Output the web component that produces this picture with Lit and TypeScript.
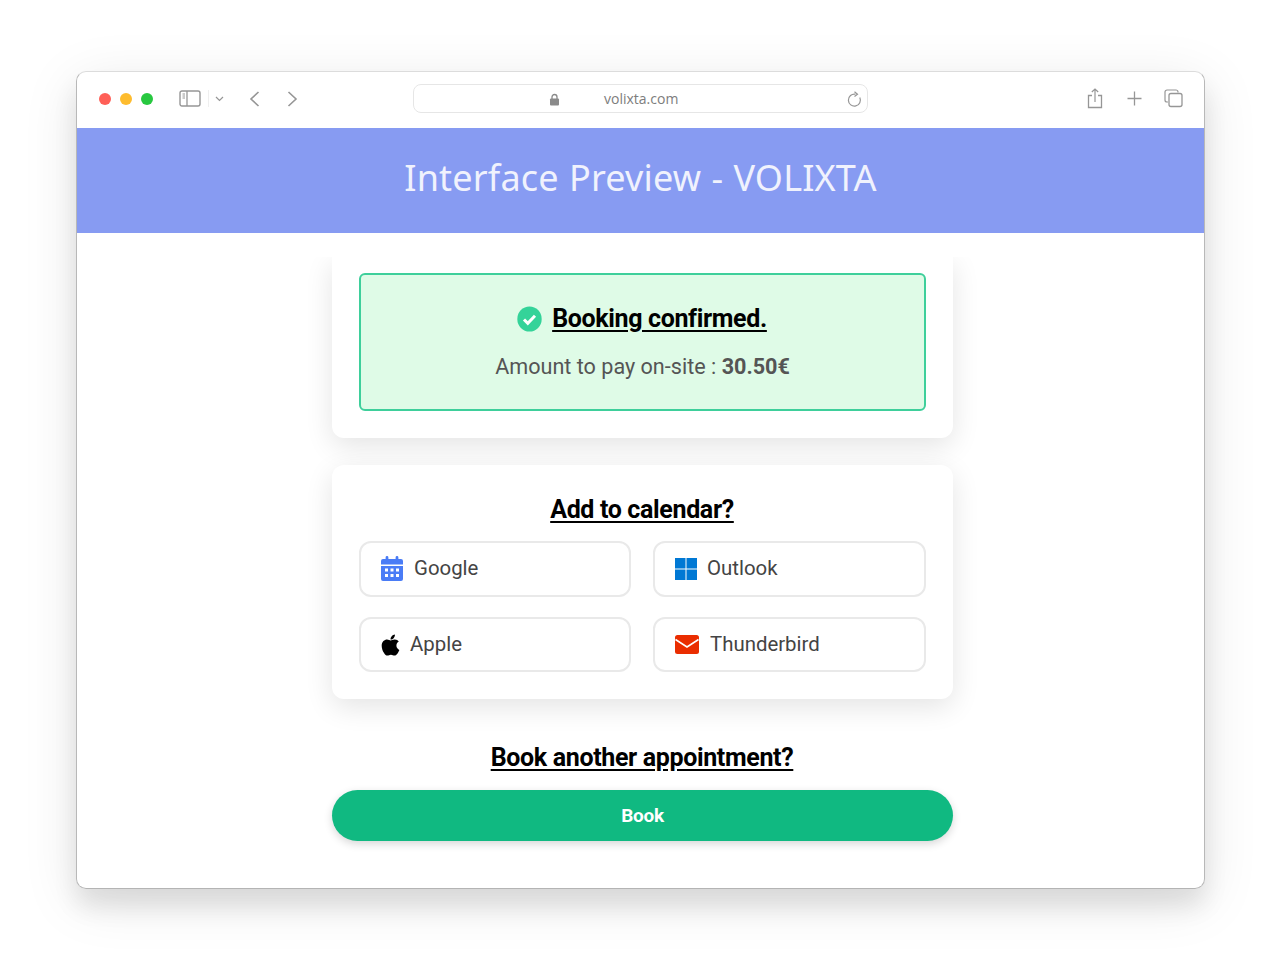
import { LitElement, html, css, svg } from "lit";
import { customElement } from "lit/decorators.js";

const apple = svg`<path d="M318.7 268.7c-.2-36.7 16.4-64.4 50-84.8-18.8-26.9-47.2-41.7-84.7-44.6-35.5-2.8-74.3 20.7-88.5 20.7-15 0-49.4-19.7-76.4-19.7C63.3 141.2 4 184.8 4 273.5q0 39.3 14.4 81.2c12.8 36.7 59 126.7 107.2 125.2 25.2-.6 43-17.9 75.8-17.9 31.8 0 48.3 17.9 76.4 17.9 48.6-.7 90.4-82.5 102.6-119.3-65.2-30.7-61.7-90-61.7-91.9zm-56.6-164.2c27.3-32.4 24.8-61.9 24-72.5-24.1 1.4-52 16.4-67.9 34.9-17.5 19.8-27.8 44.3-25.6 71.9 26.1 2 49.9-11.4 69.5-34.3z"/>`;

@customElement("app-root")
export class AppRoot extends LitElement {
  static styles = css`
    :host { display: block; height: 959px; background: #fff; overflow: hidden; font-family: Roboto, "Liberation Sans", sans-serif; }
    .page { padding: 71px 75px 0 76px; height: 959px; box-sizing: border-box; }
    .window { height: 818px; box-sizing: border-box; background: #fff; border: 1px solid #dcdcdc; border-bottom-color: #b4b4b4; border-left-color: #b8b8b8; border-right-color: #b8b8b8; border-radius: 10px; overflow: hidden; display: flex; flex-direction: column; }
    .shadow { border-radius: 10px; box-shadow: 0 18px 24px rgba(0,0,0,.09), 0 12px 56px rgba(0,0,0,.1); }
    .toolbar { height: 56px; flex: none; display: flex; align-items: center; position: relative; padding-bottom: 3px; box-sizing: border-box; }
    .dots { display: flex; gap: 9px; margin-left: 21.5px; }
    .dot { width: 12px; height: 12px; border-radius: 50%; }
    .tools { display: flex; align-items: center; }
    .tb-icon { display: block; fill: none; stroke: #969696; }
    .sidebar { margin-left: 26.5px; }
    .divider { width: 1px; height: 17px; background: #efefef; margin-left: 7px; }
    .chev { margin-left: 6px; }
    .back { margin-left: 25px; }
    .fwd { margin-left: 27px; }
    .url { position: absolute; left: 336px; top: 12px; width: 455px; height: 29px; box-sizing: border-box; border: 1.5px solid #e6e6e6; border-radius: 8px; display: flex; align-items: center; font: 14px "Open Sans", sans-serif; color: #7d7d7d; }
    .lock { margin-left: 135px; margin-top: 2px; }
    .domain { margin-left: 44px; }
    .reload { position: absolute; right: 4px; top: 6px; }
    .right { margin-left: auto; display: flex; align-items: center; gap: 18.5px; margin-right: 21px; }
    .plus { margin: 0 4px 0 5px; }
    .banner { height: 105px; flex: none; background: #879bf2; color: #f0f2fd; display: flex; align-items: center; justify-content: center; font: 36px "Noto Sans", "Open Sans", sans-serif; letter-spacing: .18px; word-spacing: .7px; padding-bottom: 6px; box-sizing: border-box; }
    .viewport { margin-top: 24px; flex: 1; overflow: hidden; padding: 0 20px 0 255px; min-height: 0; }
    .col { width: 621px; }
    .card { background: #fff; border-radius: 12px; box-shadow: 0 8px 28px rgba(0,0,0,.11); padding: 16px 27px 27px; box-sizing: border-box; }
    .card.first { border-radius: 0 0 12px 12px; height: 181px; }
    .card.second { margin-top: 27px; height: 234px; padding-top: 28px; }
    .alert { height: 138px; box-sizing: border-box; background: #dffbe7; border: 2px solid #3ecf9b; border-radius: 6px; display: flex; flex-direction: column; align-items: center; padding-top: 27px; }
    .row { display: flex; align-items: center; gap: 10px; margin-left: -1px; }
    h2 { margin: 0; font-size: 25px; line-height: 34px; font-weight: 700; color: #000; text-decoration: underline; text-underline-offset: 3px; letter-spacing: -.35px; }
    .amount { margin-top: 16px; font-size: 21.6px; line-height: 30px; color: #555; }
    .amount b { font-weight: 700; }
    .center { text-align: center; padding-right: 1px; }
    .grid { display: grid; grid-template-columns: 272px 273px; column-gap: 22px; row-gap: 20px; margin-top: 14px; }
    .btn { height: 56px; box-sizing: border-box; border: 2px solid #e9e9e9; border-radius: 12px; display: flex; align-items: center; padding: 0 0 2px 20px; font-size: 20.4px; color: #444; background: #fff; }
    .btn.low { height: 55px; }
    .i-google { margin-right: 11px; }
    .i-win { margin-right: 10px; margin-top: 1px; }
    .i-apple { margin-right: 10px; margin-top: 2px; }
    .i-mail { margin-right: 11px; margin-top: 2px; }
    .again { margin-top: 42px; }
    .book { margin-top: 15px; height: 51px; border-radius: 26px; background: #10b981; color: #fff; font-size: 19px; font-weight: 700; display: flex; align-items: center; justify-content: center; letter-spacing: -.3px; box-shadow: 0 3px 8px rgba(0,0,0,.16); padding-bottom: 1px; box-sizing: border-box; }
  `;

  render() {
    return html`<div class="page"><div class="shadow"><div class="window">
      <div class="toolbar">
        <div class="dots">
          <span class="dot" style="background:#ff5f57"></span>
          <span class="dot" style="background:#febc2e"></span>
          <span class="dot" style="background:#28c840"></span>
        </div>
        <div class="tools">
          <svg class="tb-icon sidebar" width="22" height="17" viewBox="0 0 22 17"><rect x="1" y="1" width="20" height="15" rx="2" stroke-width="1.4"/><path d="M8 1v15" stroke-width="1.3"/><path d="M3.5 4h2.5M3.5 6h2.5M3.5 8h2.5" stroke-width="1"/></svg>
          <span class="divider"></span>
          <svg class="tb-icon chev" width="9" height="6" viewBox="0 0 9 6"><path d="M1 1l3.5 3.5L8 1" stroke-width="1.2"/></svg>
          <svg class="tb-icon back" width="11" height="16" viewBox="0 0 11 16"><path d="M9.5 1L2 8l7.5 7" stroke-width="1.6"/></svg>
          <svg class="tb-icon fwd" width="11" height="16" viewBox="0 0 11 16"><path d="M1.5 1L9 8l-7.5 7" stroke-width="1.6"/></svg>
        </div>
        <div class="url">
          <svg class="lock" width="11" height="13" viewBox="0 0 11 13"><path d="M3 6V4a2.5 2.5 0 0 1 5 0v2" fill="none" stroke="#8a8a8a" stroke-width="1.3"/><rect x="1" y="5.5" width="9" height="7" rx="1" fill="#8a8a8a"/></svg>
          <span class="domain">volixta.com</span>
          <svg class="tb-icon reload" width="16" height="17" viewBox="0 0 16 17"><path d="M12.8 6.5A6 6 0 1 1 8.5 3.2" stroke-width="1.2"/><path d="M7.5 0.8l3 2.4-3 2.3" stroke-width="1.2"/></svg>
        </div>
        <div class="right">
          <svg class="tb-icon" width="16" height="21" viewBox="0 0 16 21"><path d="M5 7.5H1.5v12h13v-12H11" stroke-width="1.3"/><path d="M8 14V1M4.8 4L8 1l3.2 3" stroke-width="1.2"/></svg>
          <svg class="tb-icon plus" width="15" height="15" viewBox="0 0 15 15"><path d="M7.5 0.5v14M0.5 7.5h14" stroke-width="1.3"/></svg>
          <svg class="tb-icon" width="19" height="19" viewBox="0 0 19 19"><path d="M14 3.5V3a2 2 0 0 0-2-2H3a2 2 0 0 0-2 2v8a2 2 0 0 0 2 2h1" stroke-width="1.2"/><rect x="5" y="4.5" width="13" height="13" rx="2" stroke-width="1.3"/></svg>
        </div>
      </div>
      <div class="banner">Interface Preview - VOLIXTA</div>
      <div class="viewport"><div class="col">
        <div class="card first">
          <div class="alert">
            <div class="row">
              <svg width="25" height="26" viewBox="0 0 25 26"><ellipse cx="12.5" cy="13" rx="12.2" ry="12.6" fill="#34d399"/><path d="M7 13.5l3.8 3.8L18 9.8" fill="none" stroke="#fff" stroke-width="3"/></svg>
              <h2>Booking confirmed.</h2>
            </div>
            <div class="amount">Amount to pay on-site : <b>30.50€</b></div>
          </div>
        </div>
        <div class="card second">
          <h2 class="center">Add to calendar?</h2>
          <div class="grid">
            <div class="btn">
              <svg class="i-google" width="22" height="25" viewBox="0 0 22 25"><path fill="#4a7cf6" d="M6 0a1.4 1.4 0 0 1 1.4 1.4V3h7.2V1.4a1.4 1.4 0 0 1 2.8 0V3H20a2 2 0 0 1 2 2v3.5H0V5a2 2 0 0 1 2-2h2.6V1.4A1.4 1.4 0 0 1 6 0zM0 10h22v13a2 2 0 0 1-2 2H2a2 2 0 0 1-2-2z"/><g fill="#fff"><rect x="4" y="12.5" width="3" height="3"/><rect x="9.5" y="12.5" width="3" height="3"/><rect x="15" y="12.5" width="3" height="3"/><rect x="4" y="18" width="3" height="3"/><rect x="9.5" y="18" width="3" height="3"/><rect x="15" y="18" width="3" height="3"/></g></svg>
              Google
            </div>
            <div class="btn">
              <svg class="i-win" width="22" height="22" viewBox="0 0 22 22"><g fill="#0078d4"><rect width="10.5" height="10.5"/><rect x="11.5" width="10.5" height="10.5"/><rect y="11.5" width="10.5" height="10.5"/><rect x="11.5" y="11.5" width="10.5" height="10.5"/></g></svg>
              Outlook
            </div>
            <div class="btn low">
              <svg class="i-apple" width="19" height="24" viewBox="0 0 384 512" fill="#000">${apple}</svg>
              Apple
            </div>
            <div class="btn low">
              <svg class="i-mail" width="24" height="19" viewBox="0 0 24 19"><rect width="24" height="19" rx="2.5" fill="#ea2d00"/><path d="M0.5 4.5L12 12 23.5 4.5" fill="none" stroke="#fff" stroke-width="1.6"/></svg>
              Thunderbird
            </div>
          </div>
        </div>
        <h2 class="center again">Book another appointment?</h2>
        <div class="book">Book</div>
      </div></div>
    </div></div></div>`;
  }
}
